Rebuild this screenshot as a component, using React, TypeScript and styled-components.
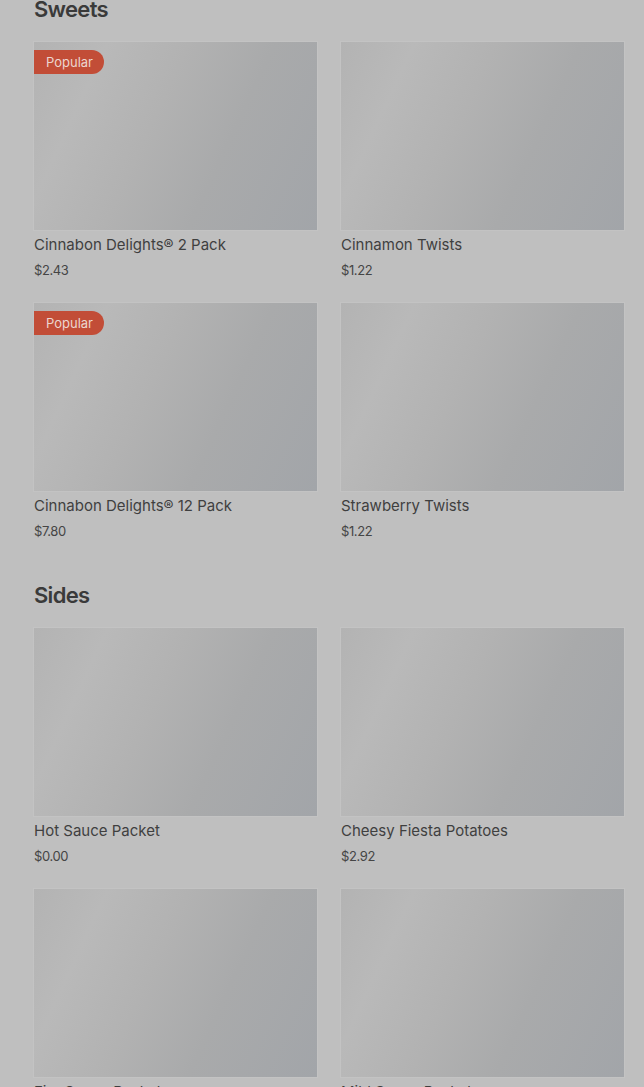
import styled, { createGlobalStyle } from "styled-components";

const GlobalStyle = createGlobalStyle`
  html, body {
    margin: 0;
    padding: 0;
    background: #bfbfbf;
    font-family: Inter, "Noto Sans", "Liberation Sans", sans-serif;
    color: #3d3d3d;
    overflow: hidden;
  }
`;

const Page = styled.div`
  padding: 0 20px 0 34px;
  margin-top: -5px;
`;

const Section = styled.section`
  margin-bottom: 40px;
`;

const SectionTitle = styled.h2`
  margin: 0 0 19px;
  font-size: 22px;
  line-height: 28px;
  font-weight: 600;
  letter-spacing: -0.7px;
  color: #3a3a3a;
`;

const Grid = styled.div`
  display: grid;
  grid-template-columns: repeat(2, 283px);
  column-gap: 24px;
  row-gap: 23px;
`;

const Card = styled.div`
  display: flex;
  flex-direction: column;
`;

const Thumb = styled.div`
  position: relative;
  height: 188px;
  background: linear-gradient(
    115deg,
    #b3b3b3 0%,
    #b9b9b9 20%,
    #b2b2b2 42%,
    #a9aaab 65%,
    #a2a5a9 100%
  );
  box-shadow: 0 0 0 1px #c3c3c3;
`;

const Badge = styled.span`
  position: absolute;
  top: 8px;
  left: 0;
  height: 24px;
  padding: 0 11px 0 12px;
  display: inline-flex;
  align-items: center;
  background: #c24d37;
  color: #ecd6cf;
  font-size: 13px;
  border-radius: 0 12px 12px 0;
`;

const Name = styled.div`
  margin-top: 4px;
  font-size: 15px;
  line-height: 22px;
  color: #3f3f3f;
`;

const Price = styled.div`
  margin-top: 4px;
  font-size: 13px;
  line-height: 20px;
  letter-spacing: -0.4px;
  color: #454545;
`;

interface Item {
  name: string;
  price: string;
  popular?: boolean;
}

const sections: { title: string; items: Item[] }[] = [
  {
    title: "Sweets",
    items: [
      { name: "Cinnabon Delights® 2 Pack", price: "$2.43", popular: true },
      { name: "Cinnamon Twists", price: "$1.22" },
      { name: "Cinnabon Delights® 12 Pack", price: "$7.80", popular: true },
      { name: "Strawberry Twists", price: "$1.22" },
    ],
  },
  {
    title: "Sides",
    items: [
      { name: "Hot Sauce Packet", price: "$0.00" },
      { name: "Cheesy Fiesta Potatoes", price: "$2.92" },
      { name: "Fire Sauce Packet", price: "$0.00" },
      { name: "Mild Sauce Packet", price: "$0.00" },
    ],
  },
];

const MenuCard = ({ name, price, popular }: Item) => (
  <Card>
    <Thumb>{popular && <Badge>Popular</Badge>}</Thumb>
    <Name>{name}</Name>
    <Price>{price}</Price>
  </Card>
);

export default function App() {
  return (
    <>
      <GlobalStyle />
      <Page>
        {sections.map((s) => (
          <Section key={s.title}>
            <SectionTitle>{s.title}</SectionTitle>
            <Grid>
              {s.items.map((it) => (
                <MenuCard key={it.name} {...it} />
              ))}
            </Grid>
          </Section>
        ))}
      </Page>
    </>
  );
}
